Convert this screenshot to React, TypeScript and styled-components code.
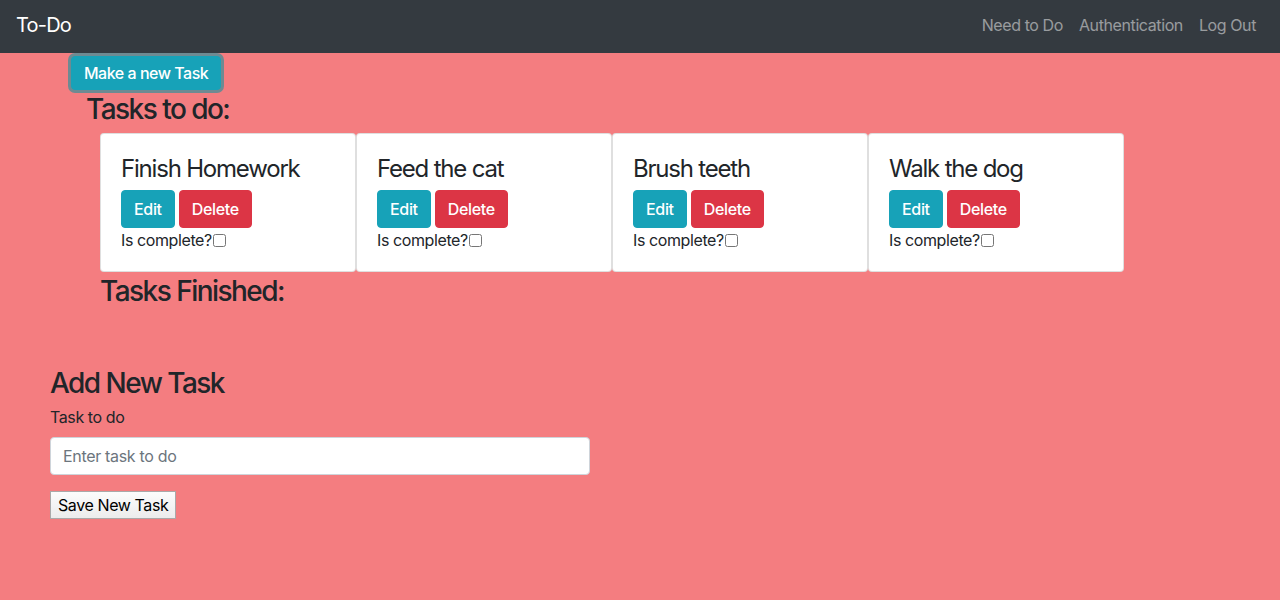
import React from "react";
import styled, { createGlobalStyle } from "styled-components";

const Global = createGlobalStyle`
  html, body { margin: 0; padding: 0; }
  body {
    font-family: Inter, "Noto Sans", "Liberation Sans", sans-serif;
    background: #f47d80;
    color: #212529;
    font-size: 16px;
    line-height: 1.5;
    letter-spacing: -0.025em;
  }
  * { box-sizing: border-box; }
`;

const Page = styled.div`
  min-height: 600px;
  background: #f47d80;
`;

const Navbar = styled.nav`
  height: 53px;
  background: #343a40;
  display: flex;
  align-items: center;
  justify-content: space-between;
  padding: 0 24px 0 16px;
`;

const Brand = styled.a`
  color: #fff;
  font-size: 20px;
  letter-spacing: -0.04em;
  text-decoration: none;
  margin-top: -4px;
`;

const NavLinks = styled.div`
  display: flex;
  gap: 16px;
  margin-top: -4px;
`;

const NavLink = styled.a`
  color: rgba(255, 255, 255, 0.5);
  font-size: 16px;
  text-decoration: none;
`;

const Main = styled.div`
  padding-left: 71px;
  padding-top: 3px;
`;

const Button = styled.button<{ $variant: "info" | "danger" }>`
  font-family: inherit;
  font-size: 16px;
  font-weight: 500;
  letter-spacing: -0.02em;
  line-height: 24px;
  color: #fff;
  background: ${(p) => (p.$variant === "info" ? "#17a2b8" : "#dc3545")};
  border: 1px solid ${(p) => (p.$variant === "info" ? "#17a2b8" : "#dc3545")};
  border-radius: 4px;
  padding: 6px 12px;
  cursor: pointer;
`;

const MakeButton = styled(Button)`
  padding: 4px 12px;
  letter-spacing: -0.03em;
  box-shadow: 0 0 0 3px #6e8a92;
`;

const SectionTitle = styled.h3<{ $indent: number; $top: number }>`
  font-size: 28px;
  font-weight: 500;
  line-height: 1.2;
  letter-spacing: -0.055em;
  margin: ${(p) => p.$top}px 0 0 ${(p) => p.$indent}px;
`;

const CardRow = styled.div`
  display: flex;
  margin-left: 100px;
  margin-top: 6px;
`;

const Card = styled.div`
  width: 256px;
  height: 139px;
  background: #fff;
  border: 1px solid rgba(0, 0, 0, 0.125);
  border-radius: 4px;
  padding: 20px;
  display: flex;
  flex-direction: column;
`;

const CardTitle = styled.h4`
  font-size: 24px;
  font-weight: 400;
  line-height: 1.2;
  letter-spacing: -0.05em;
  margin: 1px 0 7px 0;
`;

const ButtonRow = styled.div`
  display: flex;
  gap: 4px;
`;

const Complete = styled.label`
  display: flex;
  align-items: center;
  font-size: 16px;
  line-height: 24px;
`;

const Check = styled.input`
  width: 13px;
  height: 13px;
  margin: 0 0 0 1px;
`;

const Form = styled.form`
  margin-left: 50px;
  margin-top: 59px;
  width: 540px;
`;

const FormTitle = styled.h3`
  font-size: 28px;
  font-weight: 500;
  line-height: 1.2;
  letter-spacing: -0.055em;
  margin: 0 0 4px 0;
`;

const Label = styled.label`
  display: block;
  font-size: 16px;
  line-height: 24px;
  margin-bottom: 8px;
`;

const Input = styled.input`
  display: block;
  width: 540px;
  height: 38px;
  padding: 6px 12px;
  font-family: inherit;
  font-size: 16px;
  letter-spacing: -0.02em;
  color: #495057;
  background: #fff;
  border: 1px solid #ced4da;
  border-radius: 4px;
  &::placeholder { color: #6c757d; }
`;

const SaveButton = styled.button`
  margin-top: 16px;
  font-family: inherit;
  font-size: 16px;
  letter-spacing: -0.025em;
  line-height: 20px;
  padding: 3px 7px;
  color: #000;
  background: linear-gradient(#fcfcfc, #ececec);
  border: 1px solid #a9a9a9;
  border-radius: 0;
`;

const tasks = ["Finish Homework", "Feed the cat", "Brush teeth", "Walk the dog"];

export default function App() {
  return (
    <Page>
      <Global />
      <Navbar>
        <Brand href="#">To-Do</Brand>
        <NavLinks>
          <NavLink href="#">Need to Do</NavLink>
          <NavLink href="#">Authentication</NavLink>
          <NavLink href="#">Log Out</NavLink>
        </NavLinks>
      </Navbar>
      <Main>
        <MakeButton $variant="info">Make a new Task</MakeButton>
      </Main>
      <SectionTitle $indent={86} $top={3}>Tasks to do:</SectionTitle>
      <CardRow>
        {tasks.map((t) => (
          <Card key={t}>
            <CardTitle>{t}</CardTitle>
            <ButtonRow>
              <Button $variant="info">Edit</Button>
              <Button $variant="danger">Delete</Button>
            </ButtonRow>
            <Complete>
              Is complete?
              <Check type="checkbox" />
            </Complete>
          </Card>
        ))}
      </CardRow>
      <SectionTitle $indent={100} $top={3}>Tasks Finished:</SectionTitle>
      <Form onSubmit={(e) => e.preventDefault()}>
        <FormTitle>Add New Task</FormTitle>
        <Label>Task to do</Label>
        <Input placeholder="Enter task to do" />
        <SaveButton type="submit">Save New Task</SaveButton>
      </Form>
    </Page>
  );
}
